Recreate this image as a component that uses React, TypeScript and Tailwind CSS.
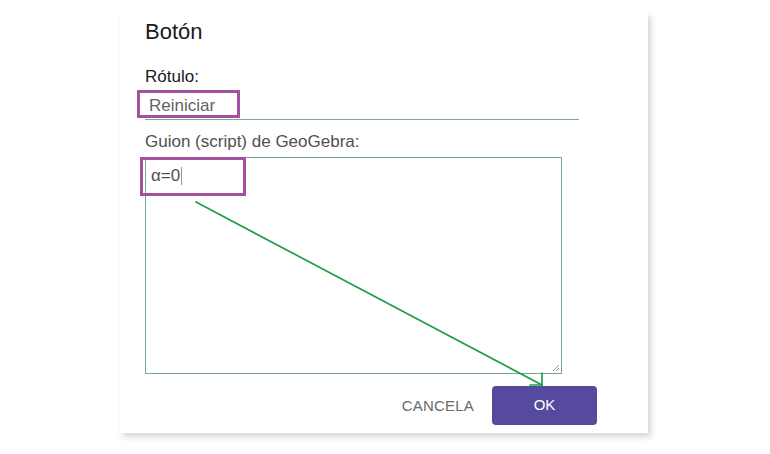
export default function App() {
    return (
        <div className="relative w-[770px] h-[454px] overflow-hidden bg-white font-['Liberation_Sans',Arial,sans-serif]">
            {/* Dialog */}
            <div className="ml-[120px] mt-[12px] w-[528px] h-[421px] bg-white pl-[25px] pt-[8px] shadow-[3px_4px_6px_rgba(0,0,0,0.16)]">
                <h2 className="text-[22px] leading-[24px] text-[#1a1a1a]">Botón</h2>

                <p className="mt-[23px] text-[17px] leading-[20px] text-[#1a1a1a]">Rótulo:</p>
                <div className="mt-[9px] w-[434px] border-b border-[#7fa898] pb-[3px] pl-[4px] text-[17px] leading-[20px] text-[#626262]">
                    Reiniciar
                </div>

                <p className="mt-[12px] text-[17px] leading-[20px] text-[#505050]">Guion (script) de GeoGebra:</p>
                <div className="relative mt-[5px] h-[217px] w-[417px] border border-[#7aa594] pl-[5px] pt-[8px]">
                    <div className="flex items-center text-[17px] leading-[20px] text-[#505050]">
                        α=0
                        <span className="ml-px h-[18px] w-px bg-[#999]" />
                    </div>
                    {/* resize grip */}
                    <svg className="absolute bottom-[1px] right-[1px]" width="8" height="8" viewBox="0 0 8 8">
                        <path d="M7 1 L1 7 M7 4 L4 7" stroke="#9a9a9a" strokeWidth="1" />
                    </svg>
                </div>

                <div className="mt-[12px] flex w-[452px] items-center justify-end gap-[18px]">
                    <button className="text-[15px] leading-[18px] tracking-[0.2px] text-[#6a6a6a]">CANCELA</button>
                    <button className="h-[39px] w-[105px] rounded-[4px] bg-[#564a9e] text-[15px] text-white">OK</button>
                </div>
            </div>

            {/* Annotation boxes */}
            <div className="absolute left-[137px] top-[90px] h-[28px] w-[103px] border-[3px] border-[#a3509d]" />
            <div className="absolute left-[140px] top-[157px] h-[39px] w-[106px] border-[3px] border-[#a3509d]" />

            {/* Annotation arrow */}
            <svg className="absolute left-0 top-0" width="770" height="454" viewBox="0 0 770 454">
                <g stroke="#1f9e4a" strokeWidth="1.7" fill="none" strokeLinecap="round">
                    <path d="M196 202 L542 385" />
                    <path d="M542 373 L542 385 L530 385" />
                </g>
            </svg>
        </div>
    );
}
